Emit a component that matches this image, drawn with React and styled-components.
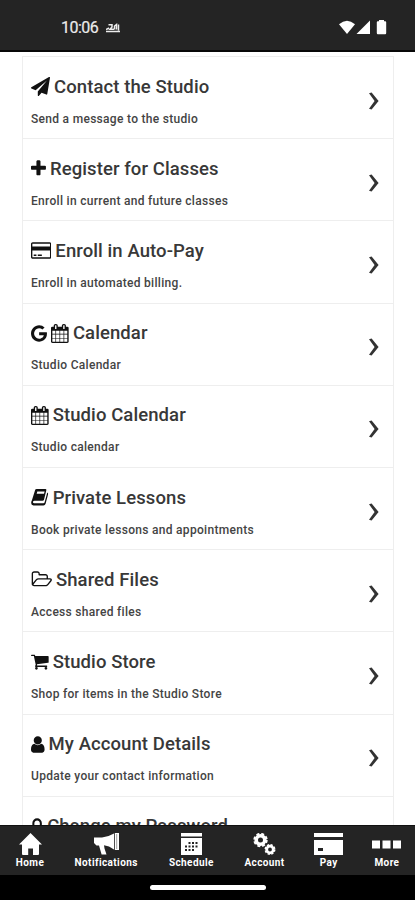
import React from 'react';
import styled, { createGlobalStyle } from 'styled-components';

const pallette = {
  bar: '#242424',
  black: '#000',
  white: '#fff',
  text: '#383838',
  line: '#eeeeee',
};

const GlobalStyles = createGlobalStyle`
  * {
    box-sizing: border-box;
  }

  body {
    margin: 0;
    background: ${pallette.white};
    font-family: Roboto, sans-serif;
  }

  h2, p {
    margin: 0;
  }

  svg {
    display: block;
    flex: none;
  }
`;

const ScreenStyles = styled.div`
  display: flex;
  flex-direction: column;
  width: 415px;
  height: 900px;
  overflow: hidden;
`;

const StatusBarStyles = styled.header`
  display: flex;
  flex: none;
  align-items: center;
  height: 52px;
  padding: 6px 28px 0 61px;
  background: ${pallette.bar};
  border-bottom: 2px solid #080808;
  color: #ececec;
`;

const Clock = styled.span`
  width: 45px;
  font-size: 16px;
  line-height: 20px;
  letter-spacing: -0.5px;
  -webkit-text-stroke: 0.2px;
`;

const StatusIcons = styled.div`
  display: flex;
  align-items: center;
  margin-left: auto;
`;

const ListStyles = styled.main`
  flex: 1;
  min-height: 0;
  overflow: hidden;
  padding: 4px 21px 0 22px;
`;

const Card = styled.div`
  border: 1px solid ${pallette.line};
`;

const RowStyles = styled.section`
  display: flex;
  align-items: center;
  justify-content: space-between;
  height: 82.2px;
  padding: 6px 14px 0 8px;
  border-bottom: 1.2px solid ${pallette.line};
`;

const RowText = styled.div`
  display: flex;
  flex-direction: column;
  gap: 12px;
`;

const Title = styled.h2`
  display: flex;
  align-items: center;
  gap: 4px;
  color: ${pallette.text};
  font-size: 18.5px;
  font-weight: 500;
  line-height: 24px;
  letter-spacing: 0.09px;
  white-space: nowrap;

  svg {
    color: #111;
  }
`;

const Description = styled.p`
  min-height: 16px;
  color: #444;
  font-size: 12px;
  font-weight: 500;
  line-height: 16px;
  letter-spacing: 0.3px;
  white-space: nowrap;
`;

const NavStyles = styled.nav`
  display: grid;
  flex: none;
  grid-template-columns: 30px 66px 48px 42px 30px 30px;
  justify-content: space-between;
  height: 50px;
  padding: 7px 13px 0 15px;
  background: ${pallette.bar};
  border-top: 1px solid #111;
`;

const NavItem = styled.div`
  display: flex;
  flex-direction: column;
  align-items: center;
  color: ${pallette.white};
`;

const NavIcon = styled.div`
  display: flex;
  align-items: center;
  height: 22px;
`;

const NavLabel = styled.span`
  margin-top: 2px;
  font-size: 10px;
  font-weight: 700;
  line-height: 12px;
  letter-spacing: 0.4px;
  white-space: nowrap;
`;

const GestureBar = styled.footer`
  display: flex;
  flex: none;
  justify-content: center;
  height: 25px;
  padding-top: 10px;
  background: ${pallette.black};
`;

const GestureHandle = styled.div`
  width: 116px;
  height: 5px;
  border-radius: 3px;
  background: ${pallette.white};
`;

const glyphs = {
  plane: {
    box: '0 0 1792 1792',
    path: 'M1764 11q33 24 27 64l-256 1536q-5 29-32 45-14 8-31 8-11 0-24-5l-453-185-242 295q-18 23-49 23-13 0-22-4-19-7-30.5-23.5t-11.5-36.5v-349l864-1059-1069 925-395-162q-37-14-40-55-2-40 32-59l1664-960q15-9 32-9 20 0 36 11z',
  },
  plus: {
    box: '192 0 1408 1792',
    path: 'M1600 736v192q0 40-28 68t-68 28h-416v416q0 40-28 68t-68 28h-192q-40 0-68-28t-28-68v-416h-416q-40 0-68-28t-28-68v-192q0-40 28-68t68-28h416v-416q0-40 28-68t68-28h192q40 0 68 28t28 68v416h416q40 0 68 28t28 68z',
  },
  card: {
    box: '0 0 1920 1792',
    path: 'M1760 128q66 0 113 47t47 113v1216q0 66-47 113t-113 47h-1600q-66 0-113-47t-47-113v-1216q0-66 47-113t113-47h1600zm-1600 128q-13 0-22.5 9.5t-9.5 22.5v224h1664v-224q0-13-9.5-22.5t-22.5-9.5h-1600zm1600 1280q13 0 22.5-9.5t9.5-22.5v-608h-1664v608q0 13 9.5 22.5t22.5 9.5h1600zm-1504-128v-128h256v128h-256zm384 0v-128h384v128h-384z',
  },
  google: {
    box: '128 0 1536 1792',
    path: 'M896 786h725q12 67 12 128 0 217-91 387.5t-259.5 266.5-386.5 96q-157 0-299-60.5t-245-163.5-163.5-245-60.5-299 60.5-299 163.5-245 245-163.5 299-60.5q300 0 515 201l-209 201q-123-119-306-119-129 0-238.5 65t-173.5 176.5-64 243.5 64 243.5 173.5 176.5 238.5 65q87 0 160-24t120-60 82-82 51.5-87 22.5-78h-436v-264z',
  },
  calendar: {
    box: '64 0 1664 1792',
    path: 'M192 1664h288v-288h-288v288zm352 0h320v-288h-320v288zm-352-352h288v-320h-288v320zm352 0h320v-320h-320v320zm-352-384h288v-288h-288v288zm736 736h320v-288h-320v288zm-384-736h320v-288h-320v288zm768 736h288v-288h-288v288zm-384-352h320v-320h-320v320zm-352-864v-288q0-13-9.5-22.5t-22.5-9.5h-64q-13 0-22.5 9.5t-9.5 22.5v288q0 13 9.5 22.5t22.5 9.5h64q13 0 22.5-9.5t9.5-22.5zm736 864h288v-320h-288v320zm-384-384h320v-288h-320v288zm384 0h288v-288h-288v288zm32-480v-288q0-13-9.5-22.5t-22.5-9.5h-64q-13 0-22.5 9.5t-9.5 22.5v288q0 13 9.5 22.5t22.5 9.5h64q13 0 22.5-9.5t9.5-22.5zm384-64v1280q0 52-38 90t-90 38h-1408q-52 0-90-38t-38-90v-1280q0-52 38-90t90-38h128v-96q0-66 47-113t113-47h64q66 0 113 47t47 113v96h384v-96q0-66 47-113t113-47h64q66 0 113 47t47 113v96h128q52 0 90 38t38 90z',
  },
  book: {
    box: '64 0 1664 1792',
    path: 'M470 150Q510 90 600 90H1420Q1540 90 1510 220L1290 1110Q1260 1200 1160 1200H400Q280 1200 250 1290Q220 1430 350 1430H1230Q1320 1430 1350 1350L1600 420Q1710 480 1670 620L1440 1490Q1390 1660 1240 1660H300Q80 1650 80 1420Q80 1280 150 1160ZM660 330L600 540H1290L1350 330Z',
  },
  folder: {
    box: '0 0 1973 1792',
    path: 'M1845 931q0-35-53-35h-1088q-40 0-85.5 21.5t-71.5 52.5l-294 363q-18 24-18 40 0 35 53 35h1088q40 0 86-22t71-53l294-363q18-22 18-39zm-1141-163h768v-160q0-40-28-68t-68-28h-576q-40 0-68-28t-28-68v-64q0-40-28-68t-68-28h-320q-40 0-68 28t-28 68v853l256-315q44-53 116-87.5t140-34.5zm1269 163q0 62-46 120l-295 363q-43 53-116 87.5t-140 34.5h-1088q-92 0-158-66t-66-158v-960q0-92 66-158t158-66h320q92 0 158 66t66 158v32h544q92 0 158 66t66 158v160h192q54 0 99 24.5t67 70.5q15 32 15 68z',
  },
  cart: {
    box: '64 0 1664 1792',
    path: 'M704 1536q0 52-38 90t-90 38-90-38-38-90 38-90 90-38 90 38 38 90zm896 0q0 52-38 90t-90 38-90-38-38-90 38-90 90-38 90 38 38 90zm128-1088v512q0 24-16.5 42.5t-40.5 21.5l-1044 122q13 60 13 70 0 16-24 64h920q26 0 45 19t19 45-19 45-45 19h-1024q-26 0-45-19t-19-45q0-11 8-31.5t16-36 21.5-40 15.5-29.5l-177-823h-204q-26 0-45-19t-19-45 19-45 45-19h256q16 0 28.500 6.500t19.500 15.500 13 24.500 8 26 5.500 29.500 4.500 26h1201q26 0 45 19t19 45z',
  },
  user: {
    box: '256 0 1280 1792',
    path: 'M1536 1399q0 109-62.5 187t-150.5 78h-854q-88 0-150.5-78t-62.5-187q0-85 8.5-160.5t31.5-152 58.5-131 94-89 134.5-34.5q131 128 313 128t313-128q76 0 134.5 34.5t94 89 58.5 131 31.5 152 8.5 160.5zm-256-887q0 159-112.5 271.5t-271.5 112.5-271.5-112.5-112.5-271.5 112.5-271.5 271.5-112.5 271.5 112.5 112.5 271.5z',
  },
  lock: {
    box: '320 0 1152 1792',
    path: 'M640 768h512v-192q0-106-75-181t-181-75-181 75-75 181v192zm832 96v576q0 40-28 68t-68 28h-960q-40 0-68-28t-28-68v-576q0-40 28-68t68-28h32v-192q0-184 132-316t316-132 316 132 132 316v192h32q40 0 68 28t28 68z',
  },
};

function Glyph({ name, size = 19 }) {
  const { box, path } = glyphs[name];
  const [, , w, h] = box.split(' ').map(Number);
  return (
    <svg width={(size * w) / h} height={size} viewBox={box} fill="currentColor">
      <path d={path} fillRule={name === 'book' ? 'evenodd' : 'nonzero'} />
    </svg>
  );
}

function Chevron() {
  return (
    <svg width="10" height="18" viewBox="0 0 10 18" fill="#333">
      <path d="M0 1.200L2.600 .4 9.600 9 2.600 17.600 0 16.800 5.600 9z" />
    </svg>
  );
}

function Row({ icons, title, text }) {
  return (
    <RowStyles>
      <RowText>
        <Title>
          {icons.map((name) => <Glyph key={name} name={name} />)}
          {title}
        </Title>
        <Description>{text}</Description>
      </RowText>
      <Chevron />
    </RowStyles>
  );
}

function StatusBar() {
  return (
    <StatusBarStyles>
      <Clock>10:06</Clock>
      <svg width="14" height="10" viewBox="0 0 14 10" fill="none" stroke="currentColor" strokeWidth="1.5">
        <path d="M0 8.500h14M0 6.500l3-1.500M2.500 1.800h3.500v2.200L4 6.200h4M8.500 6.500V3l2-1.500v5M12.500 1.500v6" />
      </svg>
      <StatusIcons>
        <svg width="48" height="18" viewBox="0 0 48 18" fill="#fff">
          <path d="M0 5.2Q8 -1.8 16 5.2L8 15z" />
          <path d="M31 1.500V15H17.500z" />
          <path d="M40 1h5v1.300h1.200q1 0 1 1V14q0 1.200-1 1.200h-7.400q-1 0-1-1.200V3.300q0-1 1-1H40z" />
        </svg>
      </StatusIcons>
    </StatusBarStyles>
  );
}

const HomeIcon = () => (
  <svg width="23" height="22" viewBox="0 0 23 22" fill="currentColor">
    <path d="M11.500 0L23 11.500h-3V21q0 1-1 1h-5v-6.500H9.200V22H4q-1 0-1-1v-9.500H0z" />
  </svg>
);

const HornIcon = () => (
  <svg width="25" height="22" viewBox="0 0 25 22" fill="currentColor">
    <path d="M0 4.500h8Q14 4 20 .5v16Q15 12.800 10 12.300l.5 3.200 2 6H7.600L5 12.500H2.500L0 10z" />
    <path d="M20.800 0H25v17h-4.200z" />
    <path d="M22.700 1v15" stroke="#777" strokeWidth=".7" />
  </svg>
);

const ScheduleIcon = () => (
  <svg width="21" height="22" viewBox="0 0 21 22">
    <path d="M0 0h21v3.500H0zM0 5h21v17H0z" fill="currentColor" />
    <path
      d="M7.500 9h2v2h-2zM11 9h2v2h-2zM14.500 9h2v2h-2zM4 12.500h2v2H4zM7.500 12.500h2v2h-2zM11 12.500h2v2h-2zM14.500 12.500h2v2h-2zM4 16h2v2H4zM7.500 16h2v2h-2zM11 16h2v2h-2z"
      fill={pallette.bar}
    />
  </svg>
);

const AccountIcon = () => (
  <svg width="23" height="22" viewBox="0 0 23 22" fill="none" stroke="currentColor">
    <circle cx="7.500" cy="7" r="4.300" strokeWidth="3.600" />
    <circle cx="7.500" cy="7" r="6.300" strokeWidth="1.800" strokeDasharray="2.970 1.980" />
    <circle cx="17" cy="16.500" r="3.300" strokeWidth="2.800" />
    <circle cx="17" cy="16.500" r="4.800" strokeWidth="1.400" strokeDasharray="2.270 1.500" />
  </svg>
);

const PayIcon = () => (
  <svg width="29" height="22" viewBox="0 0 29 22" fill="currentColor">
    <path d="M0 0h29v4H0z" />
    <path d="M0 7h29v15H0zM4 15v3h5v-3z" fillRule="evenodd" />
  </svg>
);

const MoreIcon = () => (
  <svg width="29" height="9" viewBox="0 0 29 9" fill="currentColor">
    <path d="M0 .5h8v8H0zM10.500 .5h8v8h-8zM21 .5h8v8h-8z" />
  </svg>
);

const rows = [
  { icons: ['plane'], title: 'Contact the Studio', text: 'Send a message to the studio' },
  { icons: ['plus'], title: 'Register for Classes', text: 'Enroll in current and future classes' },
  { icons: ['card'], title: 'Enroll in Auto-Pay', text: 'Enroll in automated billing.' },
  { icons: ['google', 'calendar'], title: 'Calendar', text: 'Studio Calendar' },
  { icons: ['calendar'], title: 'Studio Calendar', text: 'Studio calendar' },
  { icons: ['book'], title: 'Private Lessons', text: 'Book private lessons and appointments' },
  { icons: ['folder'], title: 'Shared Files', text: 'Access shared files' },
  { icons: ['cart'], title: 'Studio Store', text: 'Shop for items in the Studio Store' },
  { icons: ['user'], title: 'My Account Details', text: 'Update your contact information' },
  { icons: ['lock'], title: 'Change my Password', text: '' },
];

const tabs = [
  { label: 'Home', Icon: HomeIcon },
  { label: 'Notifications', Icon: HornIcon },
  { label: 'Schedule', Icon: ScheduleIcon },
  { label: 'Account', Icon: AccountIcon },
  { label: 'Pay', Icon: PayIcon },
  { label: 'More', Icon: MoreIcon },
];

export default function App() {
  return (
    <ScreenStyles>
      <GlobalStyles />
      <StatusBar />
      <ListStyles>
        <Card>
          {rows.map((row) => <Row key={row.title} {...row} />)}
        </Card>
      </ListStyles>
      <NavStyles>
        {tabs.map(({ label, Icon }) => (
          <NavItem key={label}>
            <NavIcon><Icon /></NavIcon>
            <NavLabel>{label}</NavLabel>
          </NavItem>
        ))}
      </NavStyles>
      <GestureBar>
        <GestureHandle />
      </GestureBar>
    </ScreenStyles>
  );
}
